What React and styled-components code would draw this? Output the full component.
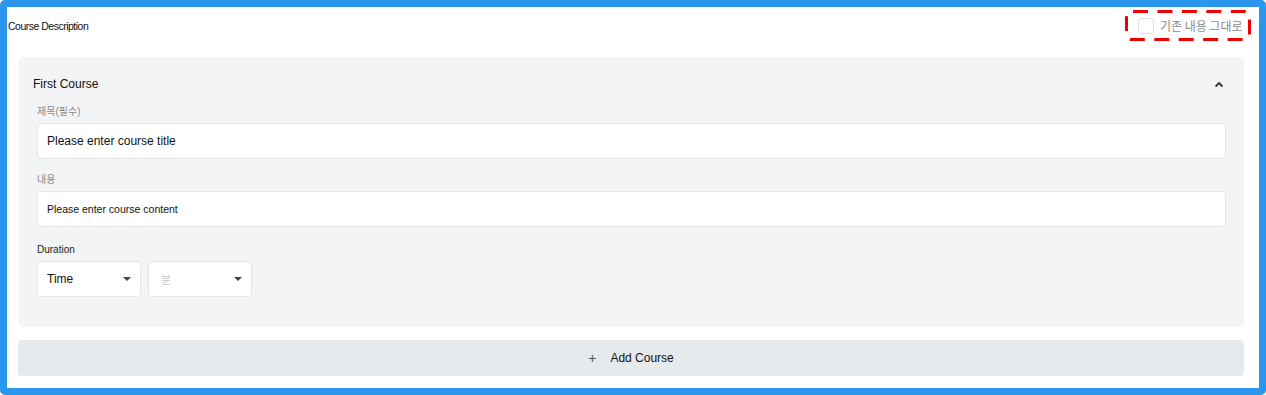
import React from 'react';
import styled, { createGlobalStyle } from 'styled-components';

const GlobalStyle = createGlobalStyle`
  * { box-sizing: border-box; }
  body {
    margin: 0;
    font-family: "Liberation Sans", Arial, "Noto Sans CJK KR", sans-serif;
    color: #111;
    background: #fff;
  }
`;

const Frame = styled.div`
  width: 1266px;
  height: 395px;
  border: 7px solid #2a96ee;
  border-radius: 5px;
  background: #fff;
  display: flex;
  flex-direction: column;
`;

const Header = styled.div`
  display: flex;
  align-items: center;
  justify-content: space-between;
  height: 34px;
  padding: 3px 8px 0 1px;
  margin-bottom: 16px;
`;

const SectionTitle = styled.span`
  font-size: 10.5px;
  letter-spacing: -0.5px;
  color: #111;
`;

const KeepLabel = styled.label`
  position: relative;
  display: flex;
  flex: none;
  align-items: center;
  gap: 6px;
  width: 126px;
  height: 31px;
  padding-left: 13px;
  font-size: 12px;
  color: #8a8a8a;
  font-family: "Noto Sans CJK KR", sans-serif;
`;

const DashOutline = styled.svg`
  position: absolute;
  left: 0;
  top: 0;
  pointer-events: none;
`;

const CheckBox = styled.span`
  width: 16px;
  height: 16px;
  border: 1px solid #dcdfe3;
  border-radius: 3px;
  background: #fff;
`;

const Body = styled.div`
  display: flex;
  flex-direction: column;
  gap: 13px;
  padding: 0 15px 0 11px;
`;

const Card = styled.div`
  background: #f3f4f6;
  border-radius: 6px;
  padding: 0 18px 30px 19px;
`;

const CardHead = styled.div`
  display: flex;
  align-items: center;
  justify-content: space-between;
  height: 48px;
  padding: 6px 2px 0 0;
  margin-left: -4px;
  font-size: 12px;
  color: #111;
`;

const Field = styled.div`
  display: flex;
  flex-direction: column;
  gap: 4px;
  margin-top: ${(p) => p.$top || 0}px;
`;

const FieldLabel = styled.span`
  font-size: 10px;
  line-height: 14px;
  color: ${(p) => (p.$dark ? '#222' : '#8a8a8a')};
  font-family: "Liberation Sans", Arial, "Noto Sans CJK KR", sans-serif;
`;

const TextInput = styled.input`
  height: 36px;
  width: 100%;
  border: 1px solid #e3e5e8;
  border-radius: 4px;
  background: #fff;
  padding: 0 9px;
  font-family: inherit;
  font-size: ${(p) => p.$size}px;
  color: #111;
  outline: none;
  &::placeholder {
    color: #111;
  }
`;

const SelectRow = styled.div`
  display: flex;
  gap: 7px;
`;

const Select = styled.div`
  width: 104px;
  height: 36px;
  display: flex;
  align-items: center;
  justify-content: space-between;
  padding: 0 9px 0 ${(p) => (p.$placeholder ? 12 : 9)}px;
  background: #fff;
  border: 1px solid #e3e5e8;
  border-radius: 4px;
  font-size: ${(p) => (p.$placeholder ? 11 : 12)}px;
  color: ${(p) => (p.$placeholder ? '#c4c7cc' : '#111')};
  font-family: "Liberation Sans", Arial, "Noto Sans CJK KR", sans-serif;
`;

const Caret = styled.span`
  width: 0;
  height: 0;
  border-left: 4px solid transparent;
  border-right: 4px solid transparent;
  border-top: 4px solid #444;
`;

const AddButton = styled.button`
  height: 36px;
  border: none;
  border-radius: 4px;
  background: #e7eaed;
  display: flex;
  align-items: center;
  justify-content: center;
  gap: 14px;
  font-family: inherit;
  font-size: 12px;
  color: #111;
  padding: 0;
  cursor: pointer;
`;

const Plus = styled.span`
  font-size: 14px;
  color: #555;
  font-weight: 300;
`;

export default function App() {
  return (
    <>
      <GlobalStyle />
      <Frame>
        <Header>
          <SectionTitle>Course Description</SectionTitle>
          <KeepLabel>
            <DashOutline width="126" height="31" viewBox="0 0 126 31">
              <rect x="1.5" y="1.5" width="123" height="28" rx="5" fill="none" stroke="#f20000" strokeWidth="3" strokeDasharray="15 9.45" strokeDashoffset="22.95" />
            </DashOutline>
            <CheckBox />
            기존 내용 그대로
          </KeepLabel>
        </Header>
        <Body>
          <Card>
            <CardHead>
              <span>First Course</span>
              <svg width="10" height="7" viewBox="0 0 10 7">
                <polyline points="1.5,5.5 5,2 8.5,5.5" fill="none" stroke="#333" strokeWidth="1.8" />
              </svg>
            </CardHead>
            <Field>
              <FieldLabel>제목(필수)</FieldLabel>
              <TextInput $size={12} placeholder="Please enter course title" />
            </Field>
            <Field $top={14}>
              <FieldLabel>내용</FieldLabel>
              <TextInput $size={10.5} placeholder="Please enter course content" />
            </Field>
            <Field $top={16}>
              <FieldLabel $dark>Duration</FieldLabel>
              <SelectRow>
                <Select>
                  Time
                  <Caret />
                </Select>
                <Select $placeholder>
                  분
                  <Caret />
                </Select>
              </SelectRow>
            </Field>
          </Card>
          <AddButton>
            <Plus>+</Plus>
            Add Course
          </AddButton>
        </Body>
      </Frame>
    </>
  );
}
